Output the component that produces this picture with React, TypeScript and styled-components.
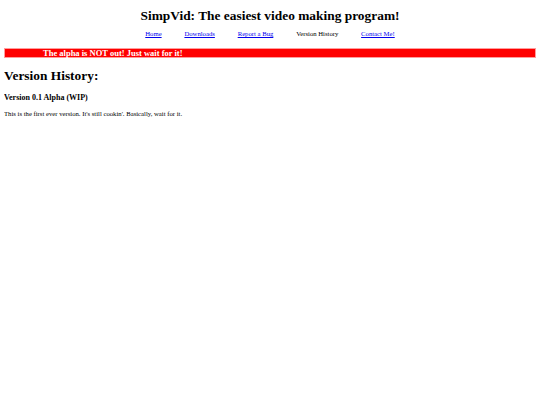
import styled, { createGlobalStyle } from 'styled-components'

const GlobalStyle = createGlobalStyle`
  body {
    margin: 4px;
    font-family: "Liberation Serif", "Times New Roman", serif;
    background: #fff;
    color: #000;
  }
`

const Title = styled.h1`
  text-align: center;
  font-size: 13.4px;
  line-height: 15px;
  margin: 4px 0 0 0;
`

const Nav = styled.nav`
  display: flex;
  justify-content: center;
  gap: 22.8px;
  margin-top: 7px;
  font-size: 6.7px;
  line-height: 8px;
`

const NavLink = styled.a<{ $current?: boolean }>`
  color: ${(p) => (p.$current ? '#000' : '#0000ee')};
  text-decoration: ${(p) => (p.$current ? 'none' : 'underline')};
`

const Banner = styled.div`
  margin-top: 10px;
  background: #ff0000;
  border: 1px solid #ff9c9c;
  color: #fff;
  font-weight: bold;
  font-size: 8.5px;
  line-height: 8px;
  padding-left: 38px;
  white-space: nowrap;
`

const Heading = styled.h2`
  font-size: 13.4px;
  line-height: 15px;
  margin: 10px 0 0 0;
`

const SubHeading = styled.h3`
  font-size: 8px;
  line-height: 11px;
  margin: 9px 0 0 0;
`

const Text = styled.p`
  font-size: 6.7px;
  line-height: 8px;
  margin: 6.5px 0 0 0;
`

export default function App() {
  return (
    <>
      <GlobalStyle />
      <Title>SimpVid: The easiest video making program!</Title>
      <Nav>
        <NavLink href="#">Home</NavLink>
        <NavLink href="#">Downloads</NavLink>
        <NavLink href="#">Report a Bug</NavLink>
        <NavLink $current>Version History</NavLink>
        <NavLink href="#">Contact Me!</NavLink>
      </Nav>
      <Banner>The alpha is NOT out! Just wait for it!</Banner>
      <Heading>Version History:</Heading>
      <SubHeading>Version 0.1 Alpha (WIP)</SubHeading>
      <Text>This is the first ever version. It's still cookin'. Basically, wait for it.</Text>
    </>
  )
}
